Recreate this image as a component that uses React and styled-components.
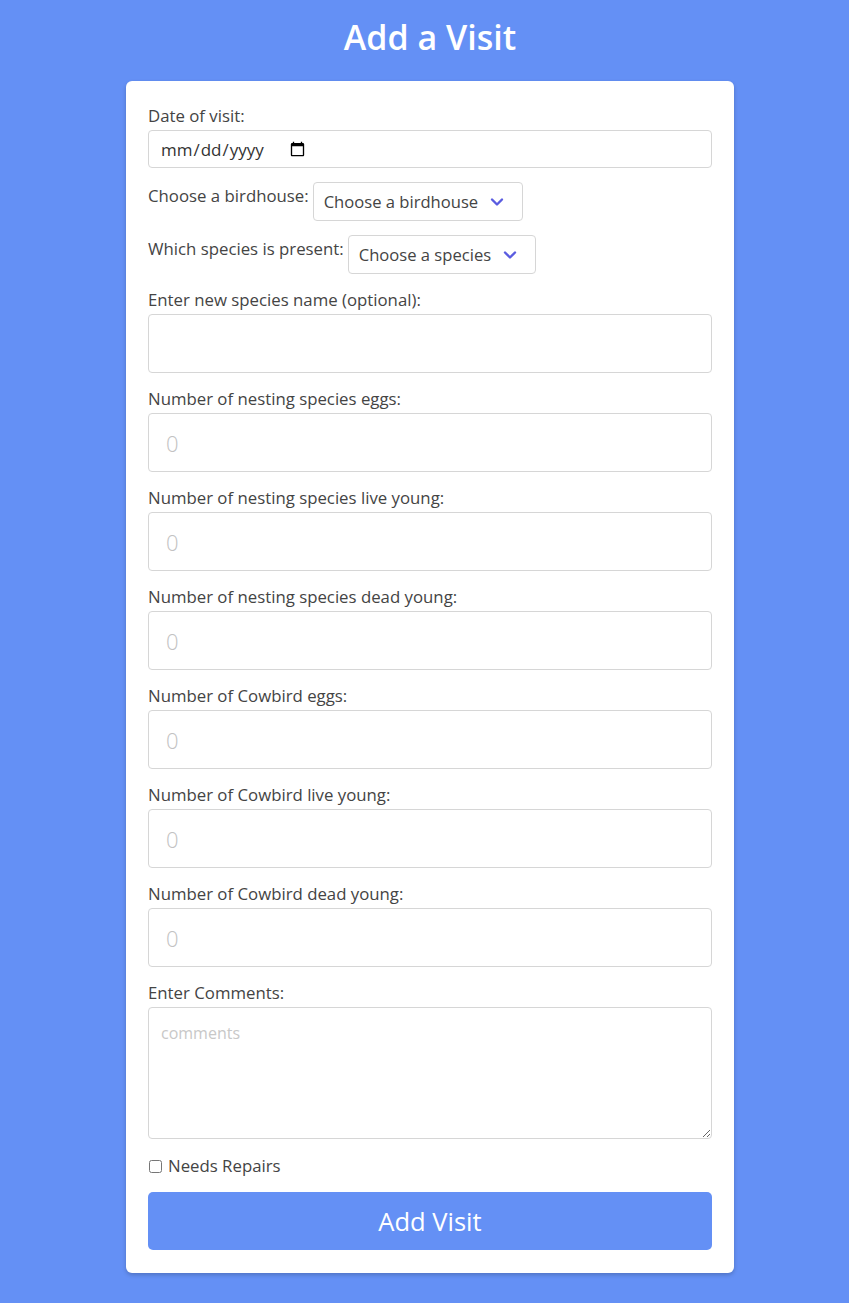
import React from 'react';
import styled, { createGlobalStyle } from 'styled-components';

const GlobalStyle = createGlobalStyle`
  html, body {
    margin: 0;
    padding: 0;
    background: #6490f5;
  }
  body {
    font-family: "Open Sans", "Noto Sans", sans-serif;
  }
`;

const Page = styled.div`
  min-height: 1303px;
  background: #6490f5;
  display: flex;
  flex-direction: column;
  align-items: center;
  padding: 14px 0 0 11px;
  box-sizing: border-box;
`;

const Heading = styled.h1`
  margin: 0 0 21px 0;
  font-size: 34px;
  line-height: 46px;
  font-weight: 600;
  color: #fff;
`;

const Card = styled.form`
  width: 608px;
  box-sizing: border-box;
  background: #fff;
  border-radius: 6px;
  box-shadow: 0 2px 4px rgba(0, 0, 0, 0.2);
  padding: 25px 22px 23px 22px;
  display: flex;
  flex-direction: column;
`;

const Label = styled.label`
  display: block;
  font-size: 16.8px;
  line-height: 20px;
  color: #444;
  margin-bottom: 4px;
`;

const InlineRow = styled.div`
  display: flex;
  align-items: flex-start;
  gap: 4px;
  margin-top: 14px;
`;

const InlineLabel = styled(Label)`
  margin: 4px 0 0 0;
`;

const DateInput = styled.input`
  width: 100%;
  box-sizing: border-box;
  height: 38px;
  border: 1px solid #d6d6d6;
  border-radius: 4px;
  padding: 0 11px;
  font-family: "Open Sans", "Noto Sans", sans-serif;
  font-size: 17px;
  color: #333;
  &::-webkit-datetime-edit {
    flex: 0 0 auto;
  }
  &::-webkit-datetime-edit-fields-wrapper {
    flex: 0 0 auto;
  }
  &::-webkit-calendar-picker-indicator {
    margin-left: -3px;
    margin-right: auto;
  }
`;

const SelectBox = styled.div`
  display: inline-flex;
  align-items: center;
  height: 39px;
  box-sizing: border-box;
  border: 1px solid #d6d6d6;
  border-radius: 4px;
  padding: 0 18px 0 10px;
  font-size: 16.6px;
  color: #444;
  gap: 12px;
`;

const Field = styled.div`
  margin-top: ${(p) => p.top || 16}px;
`;

const TextInput = styled.input`
  width: 100%;
  box-sizing: border-box;
  height: 59px;
  border: 1px solid #d6d6d6;
  border-radius: 4px;
  padding: 0 17px;
  font-family: "Open Sans", "Noto Sans", sans-serif;
  font-size: 22px;
  color: #333;
  &::placeholder {
    color: #c2c2c2;
    font-weight: 300;
  }
`;

const Comments = styled.textarea`
  display: block;
  width: 100%;
  box-sizing: border-box;
  height: 132px;
  border: 1px solid #d6d6d6;
  border-radius: 4px;
  padding: 14px 12px;
  font-family: "Open Sans", "Noto Sans", sans-serif;
  font-size: 16px;
  resize: vertical;
  &::placeholder {
    color: #c8c8c8;
  }
`;

const CheckRow = styled.label`
  display: flex;
  align-items: center;
  gap: 6px;
  margin-top: 16px;
  font-size: 16.8px;
  line-height: 22px;
  color: #444;
  input {
    margin: 0 0 0 1px;
    width: 13px;
    height: 13px;
  }
`;

const Submit = styled.button`
  margin-top: 15px;
  height: 58px;
  width: 100%;
  border: none;
  border-radius: 5px;
  background: #6490f5;
  color: #fff;
  font-family: "Open Sans", "Noto Sans", sans-serif;
  font-size: 25.5px;
  cursor: pointer;
`;

const Chevron = () => (
  <svg width="14" height="10" viewBox="0 0 14 10" fill="none">
    <path d="M2 2.5 L7 7.5 L12 2.5" stroke="#5a5ce0" strokeWidth="2.4" strokeLinecap="round" strokeLinejoin="round" />
  </svg>
);

const numberFields = [
  'Number of nesting species eggs:',
  'Number of nesting species live young:',
  'Number of nesting species dead young:',
  'Number of Cowbird eggs:',
  'Number of Cowbird live young:',
  'Number of Cowbird dead young:',
];

export default function App() {
  return (
    <Page>
      <GlobalStyle />
      <Heading>Add a Visit</Heading>
      <Card onSubmit={(e) => e.preventDefault()}>
        <Label>Date of visit:</Label>
        <DateInput type="date" />
        <InlineRow>
          <InlineLabel>Choose a birdhouse:</InlineLabel>
          <SelectBox>
            Choose a birdhouse
            <Chevron />
          </SelectBox>
        </InlineRow>
        <InlineRow>
          <InlineLabel>Which species is present:</InlineLabel>
          <SelectBox>
            Choose a species
            <Chevron />
          </SelectBox>
        </InlineRow>
        <Field top={16}>
          <Label>Enter new species name (optional):</Label>
          <TextInput type="text" />
        </Field>
        {numberFields.map((label) => (
          <Field key={label}>
            <Label>{label}</Label>
            <TextInput type="number" placeholder="0" />
          </Field>
        ))}
        <Field>
          <Label>Enter Comments:</Label>
          <Comments placeholder="comments" />
        </Field>
        <CheckRow>
          <input type="checkbox" />
          Needs Repairs
        </CheckRow>
        <Submit type="submit">Add Visit</Submit>
      </Card>
    </Page>
  );
}
